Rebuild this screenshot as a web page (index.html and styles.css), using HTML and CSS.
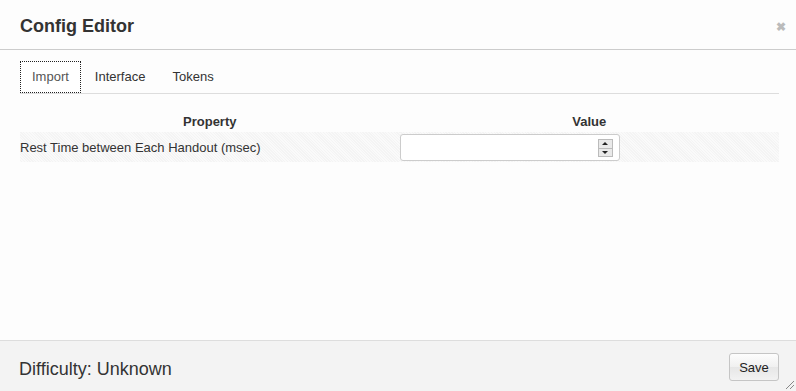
FILE: index.html
```html
<!DOCTYPE html>
<html lang="en">
<head>
  <meta charset="UTF-8" />
  <title>Config Editor</title>
  <link rel="stylesheet" href="styles.css">
</head>
<body>
  <div class="dialog">
    <div class="dialog-header">
      <h3>Config Editor</h3>
      <span class="close">&#10006;</span>
    </div>

    <div class="dialog-body">
      <ul class="tabs">
        <li class="tab activo">Import</li>
        <li class="tab">Interface</li>
        <li class="tab">Tokens</li>
      </ul>

      <table class="props">
        <thead>
          <tr>
            <th>Property</th>
            <th>Value</th>
          </tr>
        </thead>
        <tbody>
          <tr>
            <td>Rest Time between Each Handout (msec)</td>
            <td>
              <div class="num-input">
                <span class="spin">
                  <span class="arrow up"></span>
                  <span class="arrow down"></span>
                </span>
              </div>
            </td>
          </tr>
        </tbody>
      </table>
    </div>

    <div class="dialog-footer">
      <span class="difficulty">Difficulty: Unknown</span>
      <button class="save-btn">Save</button>
      <span class="grip"></span>
    </div>
  </div>
</body>
</html>
```

FILE: styles.css
```css
html, body {
  margin: 0;
  height: 100%;
}

body {
  font-family: "Liberation Sans", Arial, sans-serif;
  font-size: 13px;
  color: #333;
  background: #fdfdfd;
}

.dialog {
  height: 391px;
  display: flex;
  flex-direction: column;
  position: relative;
}

.dialog-header {
  height: 49px;
  border-bottom: 1px solid #ccc;
  display: flex;
  align-items: center;
  justify-content: space-between;
  padding: 0 10px 0 20px;
}

.dialog-header h3 {
  margin: 3px 0 0;
  font-size: 18px;
  font-weight: bold;
  color: #333;
}

.close {
  font-size: 12px;
  color: #bbb;
  font-weight: bold;
  margin-top: 4px;
}

.dialog-body {
  flex: 1;
  padding: 11px 17px 0 20px;
}

.tabs {
  list-style: none;
  margin: 0;
  padding: 0;
  display: flex;
  border-bottom: 1px solid #ddd;
  height: 32px;
}

.tab {
  padding: 0 11px;
  line-height: 30px;
  border: 1px solid transparent;
  margin-right: 2px;
  color: #333;
}

.tab.activo {
  border: 1px dotted #222;
  background: #fff;
  height: 30px;
  line-height: 29px;
  color: #555;
}

.tab:last-child {
  padding-left: 12px;
}

.props {
  width: 100%;
  border-collapse: collapse;
  margin-top: 14px;
}

.props th {
  font-weight: bold;
  text-align: center;
  padding: 6px 0 3px;
  width: 50%;
}

.props td {
  height: 30px;
  padding: 0;
  vertical-align: middle;
  background: repeating-linear-gradient(45deg, #fafafa 0, #fafafa 1px, #f4f4f4 1px, #f4f4f4 2px);
}

.num-input {
  width: 218px;
  height: 25px;
  margin-top: 1px;
  border: 1px solid #ccc;
  border-radius: 3px;
  background: #fff;
  position: relative;
}

.spin {
  position: absolute;
  right: 6px;
  top: 4px;
  width: 13px;
  height: 16px;
  border: 1px solid #bbb;
  background: #e9e9e9;
  display: flex;
  flex-direction: column;
}

.arrow {
  flex: 1;
  display: flex;
  align-items: center;
  justify-content: center;
}

.arrow.up {
  border-bottom: 1px solid #bbb;
}

.arrow.up::before {
  content: "";
  border-left: 3px solid transparent;
  border-right: 3px solid transparent;
  border-bottom: 3px solid #222;
}

.arrow.down::before {
  content: "";
  border-left: 3px solid transparent;
  border-right: 3px solid transparent;
  border-top: 3px solid #222;
}

.dialog-footer {
  height: 50px;
  border-top: 1px solid #ddd;
  background: #f3f3f3;
  display: flex;
  align-items: center;
  justify-content: space-between;
  padding: 0 17px 0 19px;
  position: relative;
}

.difficulty {
  font-size: 18px;
  color: #333;
  margin-top: 6px;
}

.save-btn {
  font-family: "Liberation Sans", Arial, sans-serif;
  font-size: 13px;
  color: #222;
  padding: 0;
  width: 50px;
  height: 28px;
  border: 1px solid #c5c5c5;
  border-radius: 3px;
  background: linear-gradient(#fdfdfd, #f0f0f0 50%, #e6e6e6 50%, #f2f2f2);
  margin-top: 2px;
}

.grip {
  position: absolute;
  right: 2px;
  bottom: 2px;
  width: 8px;
  height: 8px;
  background: linear-gradient(135deg, transparent 45%, #888 45%, #888 55%, transparent 55%, transparent 70%, #888 70%, #888 80%, transparent 80%);
}
```
